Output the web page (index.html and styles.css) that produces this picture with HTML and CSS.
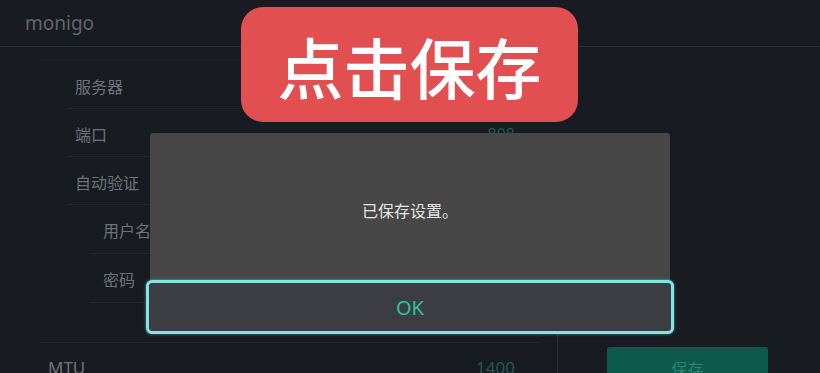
FILE: index.html
```html
<!DOCTYPE html>
<html lang="zh-CN">
<head>
<meta charset="utf-8">
<title>monigo</title>
<link rel="stylesheet" href="styles.css">
</head>
<body>
  <header class="header">monigo</header>
  <main class="settings">
    <div class="group">
      <div class="row"><span>服务器</span></div>
      <div class="row"><span>端口</span><span class="value">808</span></div>
      <div class="row"><span>自动验证</span></div>
      <div class="row sub"><span>用户名</span></div>
      <div class="row sub"><span>密码</span></div>
    </div>
    <div class="bottom">
      <div class="bottom-left">
        <div class="spacer"></div>
        <div class="row mtu"><span>MTU</span><span class="value">1400</span></div>
      </div>
      <div class="bottom-right">
        <button class="save">保存</button>
      </div>
    </div>
  </main>

  <div class="badge">点击保存</div>

  <div class="dialog">
    <div class="dialog-msg">已保存设置。</div>
    <button class="dialog-ok">OK</button>
  </div>
</body>
</html>
```

FILE: styles.css
```css
html, body {
  margin: 0;
  padding: 0;
}
body {
  width: 820px;
  height: 373px;
  overflow: hidden;
  position: relative;
  background: #181b22;
  font-family: "Noto Sans", "Noto Sans CJK SC", sans-serif;
}
.header {
  height: 46px;
  border-bottom: 1px solid #2c2f36;
  padding-left: 25px;
  display: flex;
  align-items: center;
  font-size: 19px;
  color: #62656a;
  box-sizing: content-box;
}
.settings {
  display: flex;
  flex-direction: column;
}
.group {
  margin-top: 13px;
  margin-left: 40px;
  width: 517px;
  border-top: 1px solid #1f2229;
}
.row {
  display: flex;
  align-items: center;
  justify-content: space-between;
  border-bottom: 1px solid #23262d;
  margin: 0 17px 0 27px;
  padding: 2px 25px 0 8px;
  box-sizing: border-box;
  height: 48px;
  font-family: "Noto Sans CJK SC", "Noto Sans", sans-serif;
  font-size: 16px;
  color: #6f7278;
}
.row.sub {
  margin-left: 50px;
  padding-left: 13px;
  height: 49px;
}
.value {
  color: #1f5a52;
  font-family: "Noto Sans", sans-serif;
}
.bottom {
  display: flex;
}
.bottom-left {
  margin-left: 40px;
  width: 517px;
  border-right: 1px solid #2a2d34;
}
.spacer {
  height: 39px;
  margin-right: 17px;
  border-bottom: 1px solid #23262d;
}
.row.mtu {
  margin-left: 0;
  padding-left: 8px;
  font-family: "Noto Sans", sans-serif;
  font-size: 17px;
}
.bottom-right {
  padding: 44px 0 0 49px;
}
.save {
  width: 161px;
  height: 42px;
  border: none;
  border-radius: 3px;
  background: #0b5a4c;
  color: #2d8270;
  font-family: "Noto Sans CJK SC", sans-serif;
  font-size: 16px;
  padding: 0;
}

.badge {
  position: absolute;
  left: 241px;
  top: 7px;
  width: 337px;
  height: 115px;
  border-radius: 22px;
  background: #e14f50;
  color: #ffffff;
  font-family: "Noto Sans CJK SC", sans-serif;
  font-size: 66px;
  font-weight: 500;
  display: flex;
  align-items: center;
  justify-content: center;
  line-height: 1;
}

.dialog {
  position: absolute;
  left: 150px;
  top: 133px;
  width: 520px;
  height: 201px;
  background: #474747;
  border-radius: 3px 3px 0 0;
  display: flex;
  flex-direction: column;
}
.dialog-msg {
  flex: 1;
  display: flex;
  align-items: center;
  justify-content: center;
  padding-top: 6px;
  font-family: "Noto Sans CJK SC", sans-serif;
  font-size: 16px;
  color: #e6e6e6;
}
.dialog-ok {
  margin: 0 -4px;
  height: 54px;
  border: 3px solid #80e6e4;
  border-radius: 6px;
  box-shadow: 0 0 3px rgba(128, 230, 228, 0.6);
  background: #3b3d42;
  color: #2fc49b;
  font-family: "Noto Sans", sans-serif;
  font-size: 20px;
  padding: 0;
}
```
